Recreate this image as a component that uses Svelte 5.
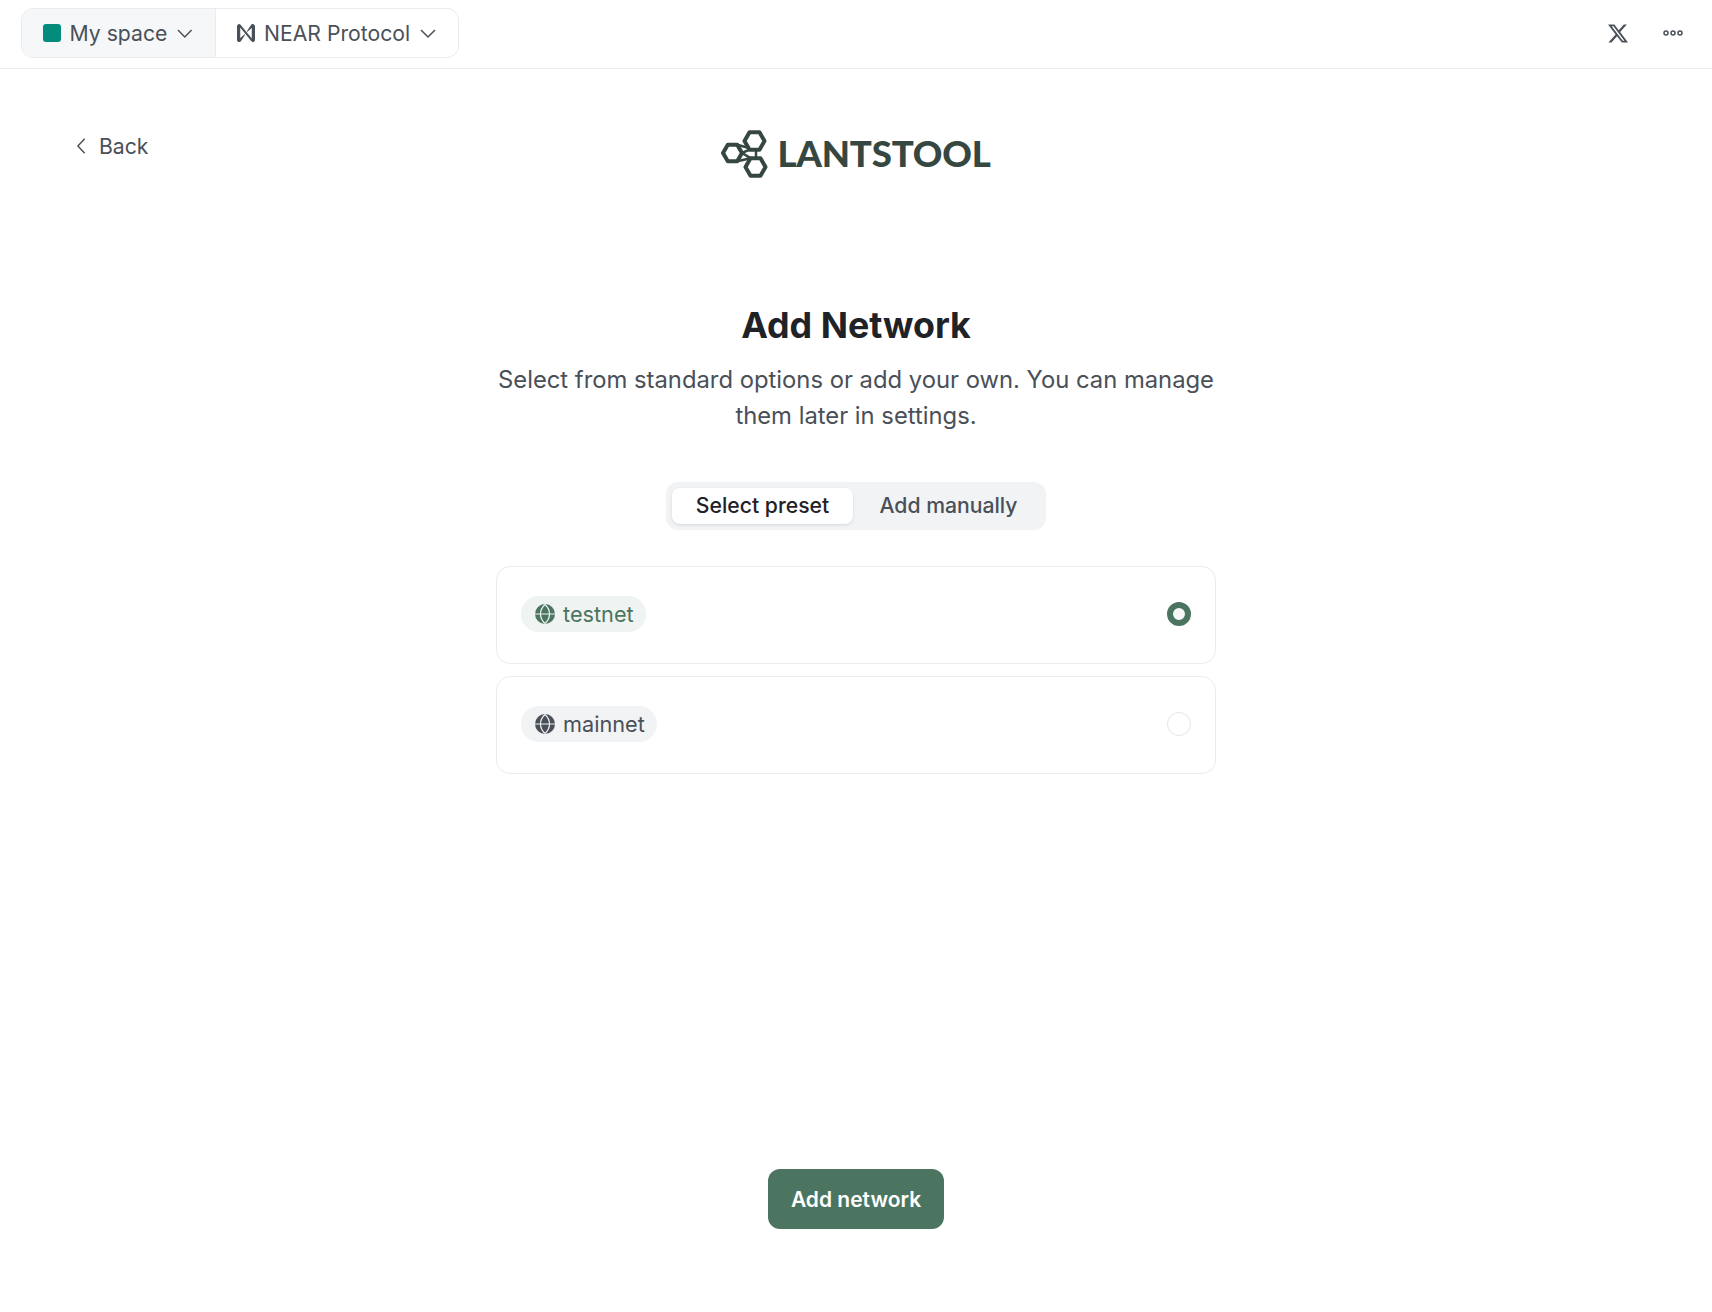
<script>
  const presets = [
    { name: 'testnet', selected: true },
    { name: 'mainnet', selected: false }
  ];
</script>

<div class="page">
  <header>
    <div class="switcher">
      <button class="seg space">
        <span class="swatch"></span>
        <span>My space</span>
        <svg class="chev" viewBox="0 0 18 18"><path d="M2 6l7 7 7-7" /></svg>
      </button>
      <button class="seg">
        <svg class="near" viewBox="2 2 20 20">
          <path d="M19.4 2c-.8 0-1.500.4-1.900 1.100L13 10c-.2.400.3.800.6.500L18 6.600c.2-.1.400 0 .4.200v10.700c0 .2-.3.300-.4.100L6.200 3.100C5.600 2.400 4.900 2 4.600 2 3.100 2 2 3.100 2 4.600v14.800C2 20.800 3.100 22 4.600 22c.8 0 1.500-.4 1.900-1.100L11 14c.2-.4-.3-.8-.6-.5L6 17.400c-.2.100-.4 0-.4-.2V6.500c0-.2.300-.3.400-.1l11.800 14.500c.6.700 1.300 1.100 1.600 1.100 1.500 0 2.600-1.100 2.600-2.600V4.600C22 3.100 20.900 2 19.400 2z" />
        </svg>
        <span>NEAR Protocol</span>
        <svg class="chev" viewBox="0 0 18 18"><path d="M2 6l7 7 7-7" /></svg>
      </button>
    </div>
    <div class="actions">
      <svg class="x" viewBox="0 0 24 24">
        <path d="M17.530 2.500h3.200l-7 8 8.240 11h-6.450l-5.050-6.600-5.780 6.600H1.480l7.490-8.560L1.070 2.500h6.610l4.570 6.040zm-1.120 17.060h1.770L6.740 4.340h-1.900z" />
      </svg>
      <svg class="more" viewBox="0 0 20 6">
        <circle cx="3" cy="3" r="2" /><circle cx="10" cy="3" r="2" /><circle cx="17" cy="3" r="2" />
      </svg>
    </div>
  </header>

  <main>
    <div class="top">
      <a class="back" href="#back">
        <svg viewBox="0 0 12 20"><path d="M9.500 2L2 10l7.500 8" /></svg>
        Back
      </a>
      <div class="logo">
        <svg viewBox="6 4 47 50">
          <path d="M49.500 17l-5-8.700h-10l-5 8.700 5 8.700h10z" />
          <path d="M50.500 43l-5-8.700h-10l-5 8.700 5 8.700h10z" />
          <path d="M27 29l-4.800-8.200h-9.400L8 29l4.800 8.200h9.400z" />
          <path d="M41 25.700v8.600M22.200 20.800L34 24M22.200 37.200l13.300-2.900M27 29l7.500-3.300M27 29l9 5.300" stroke-width="2.500" />
        </svg>
        <span>LANTSTOOL</span>
      </div>
    </div>

    <h1>Add Network</h1>
    <p>Select from standard options or add your own. You can manage them later in settings.</p>

    <div class="tabs">
      <button class="tab active">Select preset</button>
      <button class="tab manual">Add manually</button>
    </div>

    <div class="list">
      {#each presets as preset}
        <div class="card">
          <span class="pill" class:selected={preset.selected}>
            <svg viewBox="0 0 20 20">
              <circle class="disc" cx="10" cy="10" r="10" />
              <path d="M0 10h20M10 .5c-6 5.500-6 13.500 0 19M10 .5c6 5.500 6 13.500 0 19" />
            </svg>
            {preset.name}
          </span>
          <span class="radio" class:on={preset.selected}></span>
        </div>
      {/each}
    </div>

    <button class="submit">Add network</button>
  </main>
</div>

<style>
  :global(body) {
    margin: 0;
    background: #fff;
    font-family: Inter, 'Liberation Sans', sans-serif;
  }

  button {
    font: inherit;
    border: none;
    background: none;
    padding: 0;
  }

  .page {
    display: flex;
    flex-direction: column;
    min-height: 1312px;
  }

  header {
    display: flex;
    align-items: center;
    justify-content: space-between;
    padding: 8px 29px 10px 21px;
    border-bottom: 1px solid #e9ebee;
  }

  .switcher {
    display: flex;
    height: 50px;
    box-sizing: border-box;
    border: 1px solid #e9ebee;
    border-radius: 12px;
    overflow: hidden;
  }

  .seg {
    display: flex;
    align-items: center;
    color: #4a5058;
    font-size: 21.2px;
    white-space: nowrap;
    padding: 0 21px;
  }

  .space {
    background: #f6f7f9;
    border-right: 1px solid #e9ebee;
    width: 194px;
    box-sizing: border-box;
  }

  .swatch {
    width: 18px;
    height: 18px;
    margin-right: 9px;
    border-radius: 3px;
    background: #038c7c;
  }

  .chev {
    width: 18px;
    height: 18px;
    margin-left: 9px;
    fill: none;
    stroke: #4a5058;
    stroke-width: 1.5;
  }

  .near {
    width: 18px;
    height: 18px;
    margin-right: 9px;
    fill: #4a5058;
  }

  .actions {
    display: flex;
    align-items: center;
    gap: 33px;
  }

  .x {
    width: 23px;
    height: 23px;
    fill: #4a5058;
  }

  .more {
    width: 20px;
    height: 6px;
    fill: none;
    stroke: #4a5058;
    stroke-width: 1.5;
  }

  main {
    flex: 1;
    display: flex;
    flex-direction: column;
    align-items: center;
    padding: 0 75px 83px;
  }

  .top {
    align-self: stretch;
    display: grid;
    grid-template-columns: 1fr auto 1fr;
    align-items: start;
    padding-top: 59px;
  }

  .back {
    display: flex;
    align-items: center;
    gap: 12px;
    padding: 5px 0 0 1px;
    color: #4a5058;
    font-size: 21.2px;
    text-decoration: none;
  }

  .back svg {
    width: 11px;
    height: 18px;
    fill: none;
    stroke: #4a5058;
    stroke-width: 1.6;
  }

  .logo {
    display: flex;
    align-items: center;
    gap: 9px;
    color: #354740;
    font-family: Lato, sans-serif;
    font-weight: 900;
    font-size: 36.6px;
    line-height: 50px;
    letter-spacing: -0.2px;
  }

  .logo svg {
    width: 47px;
    height: 50px;
    fill: none;
    stroke: #354740;
    stroke-width: 4;
    stroke-linejoin: round;
  }

  h1 {
    margin: 123px 0 0;
    font-size: 35.8px;
    line-height: 48px;
    font-weight: 700;
    color: #1f2226;
  }

  p {
    width: 730px;
    margin: 13px 0 0;
    text-align: center;
    font-size: 23.8px;
    line-height: 36px;
    color: #4a5058;
  }

  .tabs {
    display: flex;
    margin-top: 48px;
    padding: 6px;
    width: 380px;
    box-sizing: border-box;
    border-radius: 12px;
    background: #f1f3f5;
  }

  .tab {
    height: 36px;
    padding-bottom: 2px;
    font-size: 21.2px;
    font-weight: 500;
    color: #4a5058;
    flex: 1;
  }

  .manual {
    padding-left: 4px;
  }

  .active {
    flex: 0 0 181px;
    border-radius: 8px;
    background: #fff;
    color: #1f2226;
    box-shadow: 0 1px 3px rgba(20, 30, 40, 0.12);
  }

  .list {
    display: flex;
    flex-direction: column;
    gap: 12px;
    margin-top: 36px;
    width: 720px;
  }

  .card {
    display: flex;
    align-items: center;
    justify-content: space-between;
    height: 98px;
    box-sizing: border-box;
    padding: 0 24px 2px;
    border: 1px solid #e9ebee;
    border-radius: 14px;
  }

  .pill {
    display: flex;
    align-items: center;
    gap: 8px;
    height: 36px;
    padding: 0 12px 0 14px;
    border-radius: 18px;
    background: #f1f3f5;
    color: #4a5058;
    font-size: 21.7px;
  }

  .pill svg {
    width: 20px;
    height: 20px;
    fill: none;
    stroke: #f1f3f5;
    stroke-width: 1.2;
  }

  .disc {
    fill: #4a5058;
    stroke: none;
  }

  .pill.selected {
    background: #eff3f2;
    color: #4b7560;
  }

  .pill.selected svg {
    stroke: #eff3f2;
  }

  .pill.selected .disc {
    fill: #4b7560;
  }

  .radio {
    width: 24px;
    height: 24px;
    box-sizing: border-box;
    border: 1px solid #e4e6ea;
    border-radius: 50%;
  }

  .radio.on {
    border: 6px solid #4b7560;
    background: #f6f7f9;
  }

  .submit {
    margin-top: auto;
    width: 176px;
    height: 60px;
    border-radius: 12px;
    background: #4b7560;
    color: #fff;
    font-size: 21px;
    font-weight: 600;
  }
</style>
